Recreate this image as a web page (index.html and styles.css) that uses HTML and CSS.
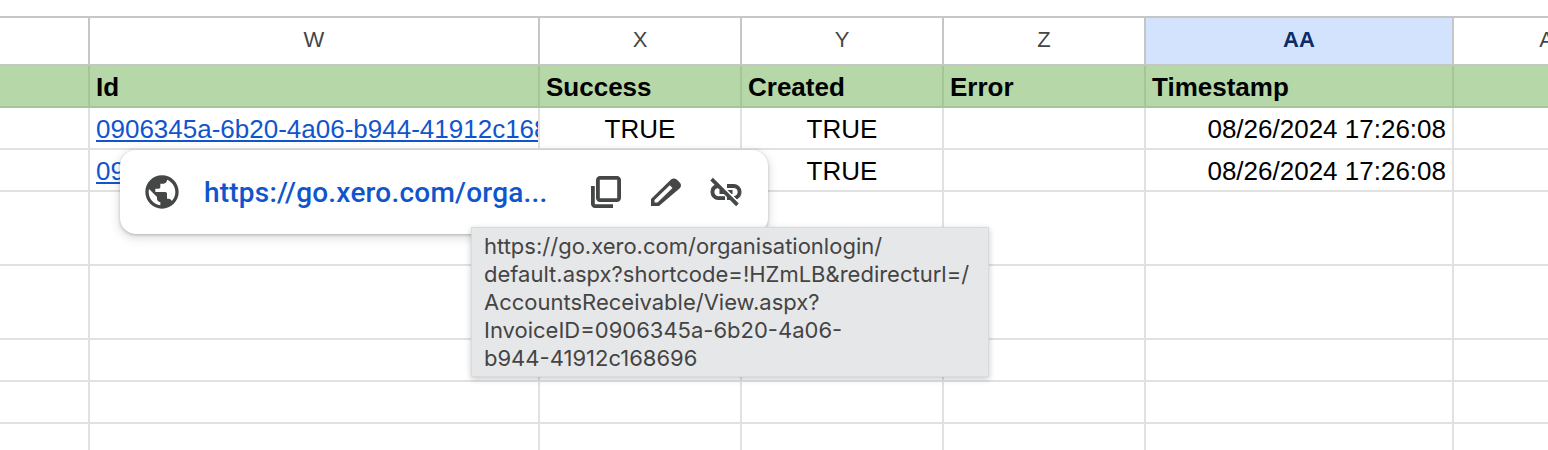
FILE: index.html
```html
<!DOCTYPE html>
<html lang="en">
<head>
<meta charset="utf-8">
<title>Sheet</title>
<link rel="stylesheet" href="styles.css">
</head>
<body>
<table class="sheet">
  <colgroup>
    <col class="c-row"><col class="c-w"><col class="c-n"><col class="c-n"><col class="c-n"><col class="c-aa"><col class="c-n">
  </colgroup>
  <thead>
    <tr class="letters">
      <th></th><th>W</th><th>X</th><th>Y</th><th>Z</th><th class="active">AA</th><th>AB</th>
    </tr>
  </thead>
  <tbody>
    <tr class="head">
      <td></td><td>Id</td><td>Success</td><td>Created</td><td>Error</td><td>Timestamp</td><td></td>
    </tr>
    <tr class="row">
      <td></td><td><a href="#">0906345a-6b20-4a06-b944-41912c168696</a></td><td class="mid">TRUE</td><td class="mid">TRUE</td><td></td><td class="end">08/26/2024 17:26:08</td><td></td>
    </tr>
    <tr class="row">
      <td></td><td><a href="#">0906345a-6b20-4a06-b944-41912c168696</a></td><td class="mid">TRUE</td><td class="mid">TRUE</td><td></td><td class="end">08/26/2024 17:26:08</td><td></td>
    </tr>
    <tr class="tall"><td></td><td></td><td></td><td></td><td></td><td></td><td></td></tr>
    <tr class="tall"><td></td><td></td><td></td><td></td><td></td><td></td><td></td></tr>
    <tr class="row"><td></td><td></td><td></td><td></td><td></td><td></td><td></td></tr>
    <tr class="row"><td></td><td></td><td></td><td></td><td></td><td></td><td></td></tr>
    <tr class="row"><td></td><td></td><td></td><td></td><td></td><td></td><td></td></tr>
  </tbody>
</table>

<div class="popup">
  <svg class="ico globe" viewBox="0 0 24 24"><path d="M12 2C6.48 2 2 6.48 2 12s4.48 10 10 10 10-4.48 10-10S17.52 2 12 2zm-1 17.93c-3.95-.49-7-3.85-7-7.93 0-.62.08-1.21.21-1.79L9 15v1c0 1.1.9 2 2 2v1.93zm6.9-2.54c-.26-.81-1-1.39-1.9-1.39h-1v-3c0-.55-.45-1-1-1H8v-2h2c.55 0 1-.45 1-1V7h2c1.1 0 2-.9 2-2v-.41c2.93 1.19 5 4.06 5 7.41 0 2.08-.8 3.97-2.1 5.39z"/></svg>
  <a class="url" href="#">https://go.xero.com/orga...</a>
  <svg class="ico copy" viewBox="0 0 30 32"><path d="M9 0h17c2.2 0 4 1.8 4 4v18c0 2.2-1.8 4-4 4H9c-2.2 0-4-1.800-4-4V4c0-2.200 1.800-4 4-4zm0 3.800c-.2 0-.2.1-.2.2v18c0 .1 0 .2.2.2h17c.2 0 .2-.1.2-.2V4c0-.1 0-.2-.2-.2H9zM0 10h3.800v18c0 .1 0 .2.200.2h18V32H4c-2.200 0-4-1.800-4-4V10z"/></svg>
  <svg class="ico edit" viewBox="0 0 30 28"><path fill-rule="evenodd" d="M0 28v-7L19.500 2c2-2 4.500-2 6.500-.2l2.500 2.500c2 2 2 4.200 0 6.200L8 28H0zM3.500 24.500H6.500L21.500 10 18.800 7.300 3.500 22z"/></svg>
  <svg class="ico unlink" viewBox="0 0 24 24"><path d="M17 7h-4v1.900h4c1.710 0 3.100 1.390 3.100 3.100 0 1.430-.98 2.630-2.310 2.980l1.460 1.460C20.880 15.610 22 13.950 22 12c0-2.760-2.240-5-5-5zm-1 4h-2.190l2 2H16zM2 4.270l3.110 3.110C3.290 8.120 2 9.910 2 12c0 2.760 2.240 5 5 5h4v-1.900H7c-1.710 0-3.100-1.390-3.100-3.100 0-1.590 1.210-2.900 2.760-3.070L8.730 11H8v2h2.730L13 15.270V17h1.730l4.010 4L20 19.740 3.270 3 2 4.270z"/></svg>
</div>

<div class="tip">https://go.xero.com/organisationlogin/<br>default.aspx?shortcode=!HZmLB&amp;redirecturl=/<br>AccountsReceivable/View.aspx?<br>InvoiceID=0906345a-6b20-4a06-<br>b944-41912c168696</div>
</body>
</html>
```
FILE: styles.css
```css
* { box-sizing: border-box; }
html, body { margin: 0; height: 450px; overflow: hidden; background: #fff; }
body { position: relative; font-family: "Liberation Sans", Arial, sans-serif; }

.sheet {
  margin-top: 16px;
  width: 1656px;
  table-layout: fixed;
  border-collapse: separate;
  border-spacing: 0;
  font-size: 26px;
  color: #000;
}
.c-row { width: 90px; }
.c-w { width: 450px; }
.c-n { width: 202px; }
.c-aa { width: 308px; }

th, td {
  padding: 2px 6px 0;
  white-space: nowrap;
  overflow: hidden;
  border-right: 2px solid #e1e1e1;
  border-bottom: 2px solid #e1e1e1;
}

.letters { height: 50px; }
.letters th {
  padding: 0 6px 3px;
  font-size: 22px;
  font-weight: 400;
  color: #444746;
  text-align: center;
  border-top: 2px solid #c4c7c5;
  border-right-color: #c4c7c5;
  border-bottom-color: #c4c7c5;
}
.letters .active { background: #d3e3fd; color: #0b2d66; font-weight: 700; }

.head { height: 42px; }
.head td {
  background: #b6d7a8;
  font-weight: 700;
  border-right-color: #a6c599;
  border-bottom-color: #a6c599;
}

.row { height: 42px; }
.tall { height: 74px; }
.mid { text-align: center; }
.end { text-align: right; }
td a { color: #1155cc; }

.popup {
  position: absolute;
  left: 120px;
  top: 150px;
  width: 648px;
  height: 84px;
  display: flex;
  align-items: center;
  padding-left: 22px;
  background: #fff;
  border-radius: 16px;
  box-shadow: 0 1px 3px rgba(60, 64, 67, .3), 0 3px 8px 2px rgba(60, 64, 67, .15);
}
.ico { display: block; flex: none; fill: #444746; }
.globe { width: 40px; height: 40px; }
.url {
  width: 344px;
  margin-left: 22px;
  font-family: Roboto, sans-serif;
  font-weight: 500;
  font-size: 28px;
  letter-spacing: .22px;
  color: #1155cc;
  text-decoration: none;
  white-space: nowrap;
}
.copy { width: 30px; height: 32px; margin-left: 43px; }
.edit { width: 30px; height: 28px; margin-left: 30px; }
.unlink { width: 36px; height: 36px; margin-left: 27px; stroke: #444746; stroke-width: .7; }

.tip {
  position: absolute;
  left: 471px;
  top: 227px;
  width: 518px;
  height: 150px;
  padding: 4px 12px;
  background: #e6e7e9;
  border: 1px solid #d9dadc;
  box-shadow: 0 2px 6px rgba(0, 0, 0, .22);
  font-family: Inter, sans-serif;
  font-size: 22px;
  line-height: 28px;
  color: #444;
  white-space: nowrap;
}
```
